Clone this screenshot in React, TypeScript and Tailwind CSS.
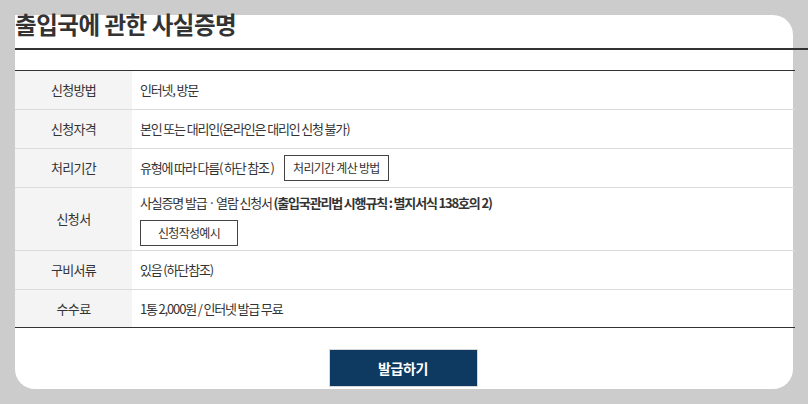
import React from 'react';

interface Row {
  label: string;
  height: string;
  content: React.ReactNode;
}

const font = { fontFamily: '"Noto Sans CJK KR", "Noto Sans", sans-serif' };

const OutlineButton: React.FC<{ children: React.ReactNode; className?: string }> = ({ children, className = '' }) => (
  <button
    type="button"
    className={`h-[26px] border border-[#444] bg-white text-[12px] tracking-[-0.06em] text-[#333] ${className}`}
  >
    {children}
  </button>
);

const rows: Row[] = [
  { label: '신청방법', height: 'h-[38px]', content: '인터넷, 방문' },
  { label: '신청자격', height: 'h-[39px]', content: '본인 또는 대리인(온라인은 대리인 신청 불가)' },
  {
    label: '처리기간',
    height: 'h-[39px]',
    content: (
      <div className="flex items-center gap-[10px]">
        <span>유형에 따라 다름( 하단 참조 )</span>
        <OutlineButton className="w-[105px]">처리기간 계산 방법</OutlineButton>
      </div>
    ),
  },
  {
    label: '신청서',
    height: 'h-[63px]',
    content: (
      <div className="flex flex-col items-start gap-[7px] pt-[1px]">
        <span>
          사실증명 발급 · 열람 신청서 <b className="font-bold">(출입국관리법 시행규칙 : 별지서식 138호의 2)</b>
        </span>
        <OutlineButton className="w-[98px]">신청작성예시</OutlineButton>
      </div>
    ),
  },
  { label: '구비서류', height: 'h-[39px]', content: '있음 (하단참조)' },
  { label: '수수료', height: 'h-[38px]', content: '1통 2,000원 / 인터넷 발급 무료' },
];

export default function App() {
  return (
    <div className="h-[404px] w-[808px] overflow-hidden bg-[#cccccc] pl-[15px] pt-[15px]" style={font}>
      <div className="flex h-[374px] w-[778px] flex-col rounded-tr-[20px] rounded-b-[20px] bg-white">
        <h2 className="-mt-[6px] w-[793px] border-b-2 border-[#333] pb-[9px] text-[23.5px] font-bold leading-[30px] tracking-[-0.02em] text-[#333]">
          출입국에 관한 사실증명
        </h2>

        <div className="mt-[20px] w-[780px] border-y border-[#333] text-[13px] text-[#333]">
          {rows.map((row, i) => (
            <div key={row.label} className={`flex ${row.height} ${i > 0 ? 'border-t border-[#dcdcdc]' : ''}`}>
              <div className="flex w-[117px] shrink-0 items-center justify-center bg-[#f4f4f4] tracking-[-0.05em]">
                {row.label}
              </div>
              <div className="flex flex-1 items-center pl-[8px] tracking-[-0.09em]">{row.content}</div>
            </div>
          ))}
        </div>

        <div className="mt-[21px] flex justify-center">
          <button
            type="button"
            className="-ml-[2px] h-[38px] w-[149px] border border-[#d8d8d8] bg-[#0e3a62] text-[14px] font-bold tracking-[-0.03em] text-white"
          >
            발급하기
          </button>
        </div>
      </div>
    </div>
  );
}
